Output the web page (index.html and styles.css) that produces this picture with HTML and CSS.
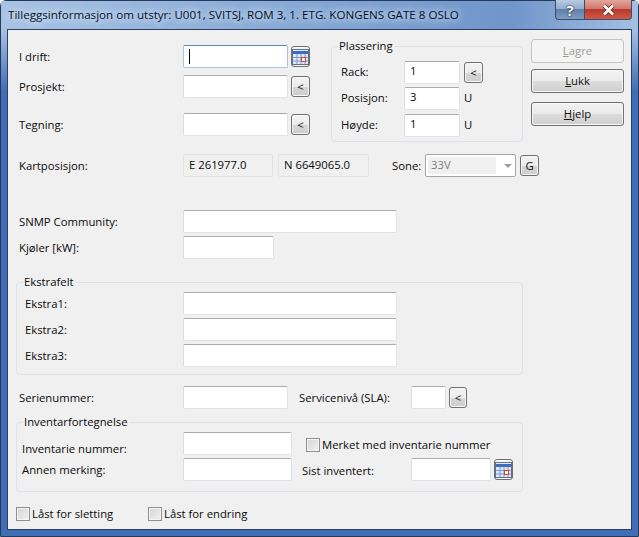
FILE: index.html
```html
<!DOCTYPE html>
<html lang="no">
<head>
<meta charset="utf-8">
<title>Tilleggsinformasjon</title>
<link rel="stylesheet" href="styles.css">
</head>
<body>
<div class="window">
  <div class="titlebar">
    <span class="title">Tilleggsinformasjon om utstyr: U001, SVITSJ, ROM 3, 1. ETG. KONGENS GATE 8 OSLO</span>
    <div class="caption">
      <div class="cap cap-help">?</div>
      <div class="cap cap-close"><svg width="15" height="12" viewBox="0 0 15 12"><path d="M3 1.5 L12 10.5 M12 1.5 L3 10.5" stroke="#6b2a22" stroke-width="4.2" fill="none"/><path d="M3 1.5 L12 10.5 M12 1.5 L3 10.5" stroke="#fff" stroke-width="2.6" fill="none"/></svg></div>
    </div>
  </div>
  <div class="client">
    <div class="top">
      <div class="top-left">
        <div class="row r-drift">
          <span class="lbl">I drift:</span>
          <div class="input w105 focus"><span class="caret"></span></div>
          <button class="btn-s cal"><svg width="17" height="17" viewBox="0 0 17 17"><rect x="0.5" y="1.5" width="16" height="15" fill="#dfe8f7" stroke="#5f6f88"/><rect x="1" y="3" width="15" height="3" fill="#3f6cc0"/><path d="M1 1.5h15" stroke="#777" stroke-dasharray="1 1"/><path d="M5 6v10M9 6v10M13 6v10M1 9.5h15M1 13h15" stroke="#7d9ad8"/><rect x="9.5" y="9.5" width="4" height="4" fill="#fff" stroke="#e0401c"/></svg></button>
        </div>
        <div class="row r-proj">
          <span class="lbl">Prosjekt:</span>
          <div class="input w105"></div>
          <button class="btn-s">&lt;</button>
        </div>
        <div class="row r-teg">
          <span class="lbl">Tegning:</span>
          <div class="input w105"></div>
          <button class="btn-s">&lt;</button>
        </div>
      </div>
      <fieldset class="group plassering">
        <legend>Plassering</legend>
        <div class="prow"><span class="plbl">Rack:</span><div class="input w56 val">1</div><button class="btn-s">&lt;</button></div>
        <div class="prow"><span class="plbl">Posisjon:</span><div class="input w56 val">3</div><span class="unit">U</span></div>
        <div class="prow"><span class="plbl">Høyde:</span><div class="input w56 val">1</div><span class="unit">U</span></div>
      </fieldset>
      <div class="actions">
        <button class="btn disabled"><u>L</u>agre</button>
        <button class="btn"><u>L</u>ukk</button>
        <button class="btn b-help"><u>H</u>jelp</button>
      </div>
    </div>

    <div class="row r-kart">
      <span class="lbl">Kartposisjon:</span>
      <div class="input ro w90">E 261977.0</div>
      <div class="input ro w91">N 6649065.0</div>
      <span class="lbl-sone">Sone:</span>
      <div class="select"><span class="sel-val">33V</span><span class="arrow"></span></div>
      <button class="btn-s btn-g">G</button>
    </div>

    <div class="row r-snmp">
      <span class="lbl">SNMP Community:</span>
      <div class="input w214"></div>
    </div>
    <div class="row r-kjol">
      <span class="lbl">Kjøler [kW]:</span>
      <div class="input w91"></div>
    </div>

    <fieldset class="group ekstra">
      <legend>Ekstrafelt</legend>
      <div class="row erow"><span class="elbl">Ekstra1:</span><div class="input w214"></div></div>
      <div class="row erow"><span class="elbl">Ekstra2:</span><div class="input w214"></div></div>
      <div class="row erow"><span class="elbl">Ekstra3:</span><div class="input w214"></div></div>
    </fieldset>

    <div class="row r-serie">
      <span class="lbl">Serienummer:</span>
      <div class="input w105"></div>
      <span class="lbl-sla">Servicenivå (SLA):</span>
      <div class="input w35"></div>
      <button class="btn-s btn-sla">&lt;</button>
    </div>

    <fieldset class="group inv">
      <legend>Inventarfortegnelse</legend>
      <div class="row irow">
        <span class="elbl ilbl ilbl-low">Inventarie nummer:</span>
        <div class="input w109"></div>
        <label class="chk chk-merket"><span class="box"></span>Merket med inventarie nummer</label>
      </div>
      <div class="row irow">
        <span class="elbl ilbl">Annen merking:</span>
        <div class="input w109"></div>
        <span class="lbl-sist">Sist inventert:</span>
        <div class="input w80"></div>
        <button class="btn-s cal"><svg width="17" height="17" viewBox="0 0 17 17"><rect x="0.5" y="1.5" width="16" height="15" fill="#dfe8f7" stroke="#5f6f88"/><rect x="1" y="3" width="15" height="3" fill="#3f6cc0"/><path d="M1 1.5h15" stroke="#777" stroke-dasharray="1 1"/><path d="M5 6v10M9 6v10M13 6v10M1 9.5h15M1 13h15" stroke="#7d9ad8"/><rect x="9.5" y="9.5" width="4" height="4" fill="#fff" stroke="#e0401c"/></svg></button>
      </div>
    </fieldset>

    <div class="bottom">
      <label class="chk chk-slett"><span class="box"></span>Låst for sletting</label>
      <label class="chk"><span class="box"></span>Låst for endring</label>
    </div>
  </div>
</div>
</body>
</html>
```
FILE: styles.css
```css
* { box-sizing: border-box; }
html, body { margin: 0; padding: 0; }
body {
  width: 639px;
  height: 537px;
  overflow: hidden;
  background: #fff;
  font-family: "Open Sans", "Noto Sans", sans-serif;
  font-size: 11.3px;
  color: #0a0a0a;
}
.window {
  position: relative;
  width: 639px;
  height: 537px;
  padding: 0 6px 6px 6px;
  border: 1px solid #26395a;
  border-radius: 6px 6px 0 0;
  background: linear-gradient(180deg, #b8cee9 0, #a4bfe2 30px, #3f6db6 90px);
  display: flex;
  flex-direction: column;
}
.titlebar {
  position: relative;
  height: 28px;
  flex: none;
  margin: 0 -6px;
  padding: 6px 0 0 7px;
  background: linear-gradient(90deg, #a9c3e4 0, #7fa3d2 55%, #6f95cb 80%, #a5bfe2 100%);
}
.title {
  display: block;
  line-height: 16px;
  font-size: 11.6px;
  color: #05101f;
  white-space: nowrap;
  text-shadow: 0 0 6px #dce9f8, 0 0 8px #dce9f8;
}
.caption {
  position: absolute;
  top: -1px;
  right: 6px;
  display: flex;
  height: 20px;
}
.cap {
  height: 20px;
  display: flex;
  align-items: center;
  justify-content: center;
  border: 1px solid #3e4d66;
  border-top: none;
}
.cap-help {
  width: 29px;
  border-radius: 0 0 0 4px;
  border-right: none;
  background: linear-gradient(180deg, #b9cbe2 0, #94aed0 45%, #5f80ab 50%, #7e9cc4 100%);
  color: #fff;
  font-weight: 700;
  font-size: 15px;
  text-shadow: 0 0 2px #1a2233, 0 0 1px #1a2233;
}
.cap-close {
  width: 48px;
  border-radius: 0 0 4px 0;
  background: linear-gradient(180deg, #e2a79c 0, #d2796c 45%, #b8382b 50%, #cf5a48 100%);
}
.client {
  flex: 1;
  background: #f0f0f0;
  border: 1px solid #2c3f5e;
  padding: 9px 0 0 0;
  display: flex;
  flex-direction: column;
  position: relative;
}
.top { display: flex; height: 107px; flex: none; }
.top-left { width: 323px; padding-top: 6px; flex: none; }
.row { display: flex; align-items: center; height: 23px; }
.r-proj { margin-top: 7px; }
.r-teg { margin-top: 15px; }
.lbl { width: 175px; padding-left: 11px; flex: none; }
.input {
  height: 23px;
  flex: none;
  background: #fff;
  border: 1px solid #e2e3e6;
  border-top-color: #ababab;
  border-left-color: #dcdde0;
  border-radius: 2px;
  padding: 0 5px;
  line-height: 19px;
  overflow: hidden;
}
.val { line-height: 18px; }
.focus { border-color: #a8c6e0; border-top-color: #5a8ab0; display: flex; align-items: center; }
.caret { display: block; width: 1px; height: 15px; background: #000; }
.w35 { width: 35px; }
.w56 { width: 56px; }
.w80 { width: 80px; }
.w90 { width: 90px; }
.w91 { width: 91px; }
.w105 { width: 105px; }
.w109 { width: 109px; }
.w214 { width: 214px; }
.btn-s {
  width: 19px;
  height: 21px;
  flex: none;
  margin-left: 3px;
  padding: 0;
  border: 1px solid #707070;
  border-radius: 3px;
  background: linear-gradient(180deg, #f3f3f3 0, #ebebeb 50%, #d6d6d6 51%, #cdcdcd 100%);
  box-shadow: inset 0 0 0 1px #f8f8f8;
  font-family: inherit;
  font-size: 11.3px;
  line-height: 17px;
  color: #111;
  display: flex;
  align-items: center;
  justify-content: center;
}
.cal svg { display: block; }
.group {
  margin: 0;
  padding: 0;
  border: 1px solid #dde3ea;
  border-radius: 4px;
  background: #f0f0f0;
  min-width: 0;
}
.group legend {
  padding: 0 2px 0 1px;
  margin-left: 6px;
  line-height: 16px;
  font-size: 11.3px;
}
.plassering {
  width: 192px;
  height: 104px;
  margin-top: -1px;
  flex: none;
  padding: 7px 0 0 8px;
}
.plassering legend { margin-left: -2px; }
.prow { display: flex; align-items: center; height: 23px; margin-left: -4px; }
.prow + .prow { margin-top: 3px; }
.prow:last-child { margin-top: 4px; }
.plbl { width: 68px; flex: none; padding-left: 5px; position: relative; top: -1px; }
.prow .btn-s { margin-left: 4px; }
.unit { margin-left: 4px; position: relative; top: -1px; }
.actions {
  width: 93px;
  margin-left: 8px;
  flex: none;
}
.btn {
  display: block;
  width: 93px;
  height: 24px;
  padding: 0 0 2px;
  border: 1px solid #707070;
  border-radius: 3px;
  background: linear-gradient(180deg, #f2f2f2 0, #ebebeb 50%, #dddddd 51%, #cfcfcf 100%);
  box-shadow: inset 0 0 0 1px #f8f8f8;
  font-family: inherit;
  font-size: 11.3px;
  color: #111;
  text-align: center;
  margin-bottom: 6px;
}
.btn.disabled {
  border-color: #c4c4c4;
  background: #f4f4f4;
  box-shadow: none;
  color: #9a9a9a;
}
.b-help { margin-top: 9px; }
.r-kart { margin-top: 8px; }
.ro { background: #f0f0f0; border-color: #e2e3e6; margin-right: 5px; }
.lbl-sone { margin-left: 18px; width: 33px; flex: none; }
.select {
  width: 91px;
  height: 23px;
  flex: none;
  border: 1px solid #a6a6a6;
  border-radius: 2px;
  background: #fff;
  padding: 2px;
  display: flex;
  align-items: center;
  color: #7c7c7c;
}
.sel-val { width: 68px; height: 17px; background: #f0f0f0; padding-left: 3px; line-height: 15px; }
.arrow {
  margin-left: 8px;
  width: 0;
  height: 0;
  border-left: 4px solid transparent;
  border-right: 4px solid transparent;
  border-top: 4px solid #a0a0a0;
}
.btn-g { margin-left: 4px; }
.r-snmp { margin-top: 33px; }
.r-kjol { margin-top: 3px; }
.ekstra {
  width: 507px;
  height: 101px;
  margin: 15px 0 0 8px;
  padding-top: 2px;
  flex: none;
}
.erow { margin-bottom: 3px; }
.elbl { width: 166px; padding-left: 8px; flex: none; }
.ilbl { padding-left: 5px; }
.ilbl-low { position: relative; top: 5px; }
.r-serie { margin-top: 11px; }
.lbl-sla { margin-left: 11px; width: 112px; flex: none; }
.btn-sla { width: 18px; }
.inv {
  width: 507px;
  height: 78px;
  margin: 5px 0 0 8px;
  padding-top: 2px;
  flex: none;
}
.irow { margin-bottom: 3px; }
.chk { display: flex; align-items: center; white-space: nowrap; }
.box {
  width: 14px;
  height: 14px;
  flex: none;
  margin-right: 2px;
  border: 1px solid #8e8f8f;
  background: linear-gradient(135deg, #d5d5d5 0, #f0f0f0 100%);
  box-shadow: inset 0 0 0 1px #f4f4f4;
}
.chk-merket { margin-left: 14px; position: relative; top: 1px; }
.lbl-sist { margin-left: 10px; width: 109px; flex: none; position: relative; top: 1px; }
.bottom { display: flex; margin-top: 14px; padding-left: 8px; }
.chk-slett { width: 132px; flex: none; }
```
